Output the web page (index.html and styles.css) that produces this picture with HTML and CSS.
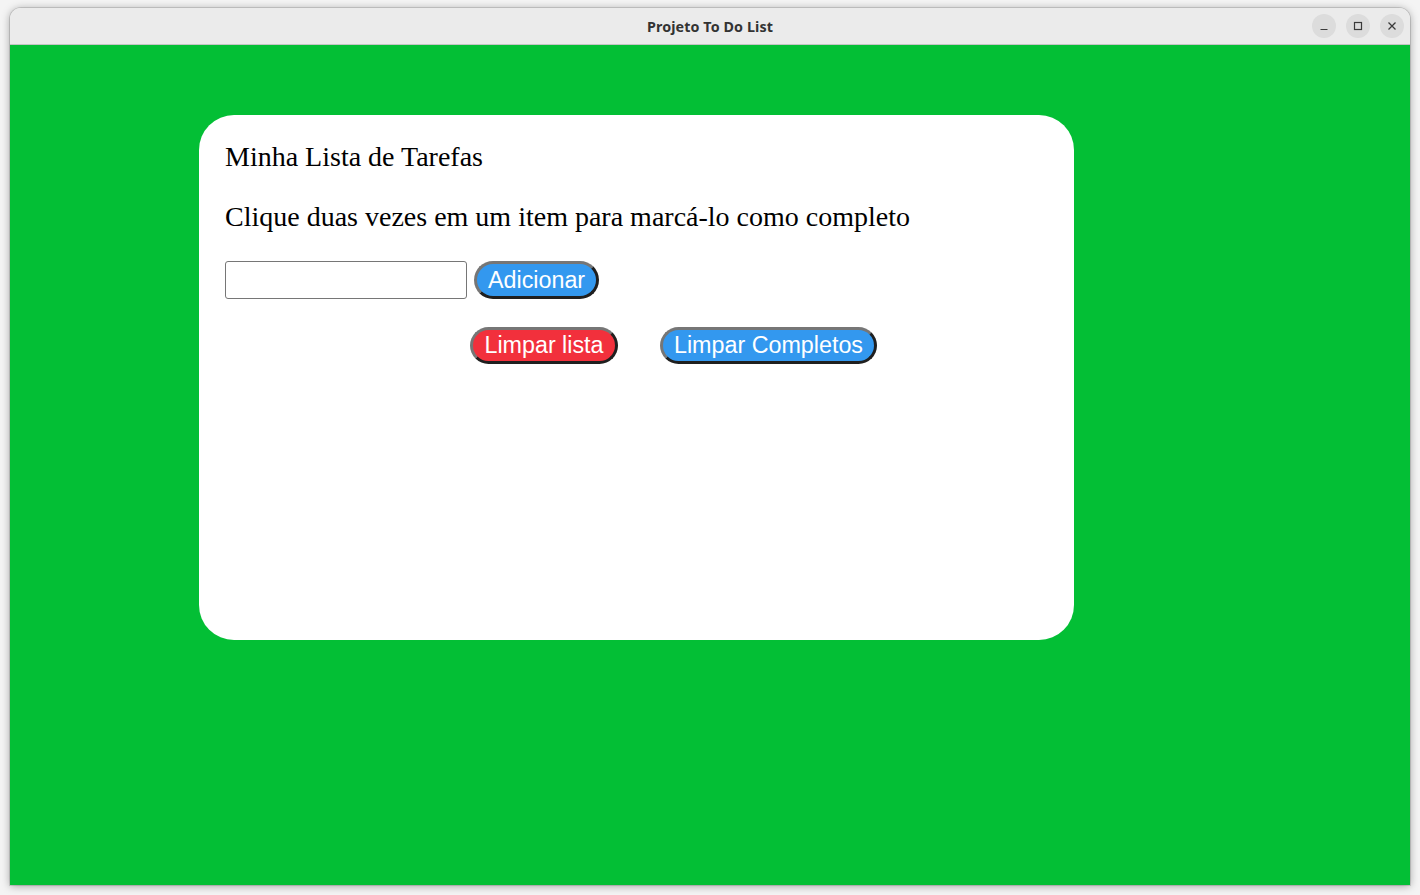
FILE: index.html
```html
<!DOCTYPE html>
<html lang="pt-BR">
<head>
<meta charset="utf-8">
<title>Projeto To Do List</title>
<link rel="stylesheet" href="styles.css">
</head>
<body>
<div class="desktop">
  <div class="window">
    <header class="titlebar">
      <span class="spacer"></span>
      <span class="title">Projeto To Do List</span>
      <div class="controls">
        <span class="ctl"><svg width="10" height="10" viewBox="0 0 10 10"><path d="M1.5 8.5h7" stroke="#3a3a3a" stroke-width="1.2"/></svg></span>
        <span class="ctl"><svg width="10" height="10" viewBox="0 0 10 10"><rect x="1.5" y="1.5" width="7" height="7" fill="none" stroke="#3a3a3a" stroke-width="1.2"/></svg></span>
        <span class="ctl"><svg width="10" height="10" viewBox="0 0 10 10"><path d="M1.5 1.5l7 7M8.5 1.5l-7 7" stroke="#3a3a3a" stroke-width="1.3"/></svg></span>
      </div>
    </header>
    <main class="app">
      <section class="card">
        <div class="heading">Minha Lista de Tarefas</div>
        <p class="hint">Clique duas vezes em um item para marcá-lo como completo</p>
        <div class="add-row">
          <input class="task-input" type="text">
          <button class="btn btn-blue">Adicionar</button>
        </div>
        <div class="clear-row">
          <button class="btn btn-red btn-clear">Limpar lista</button>
          <button class="btn btn-blue btn-done">Limpar Completos</button>
        </div>
        <ul class="list"></ul>
      </section>
    </main>
  </div>
</div>
</body>
</html>
```
FILE: styles.css
```css
html, body {
  margin: 0;
  padding: 0;
  background: #f6f6f6;
}

.desktop {
  width: 1420px;
  height: 895px;
  box-sizing: border-box;
  padding: 8px 10px 10px 10px;
  background: #f4f4f4;
}

.window {
  width: 1400px;
  height: 877px;
  display: flex;
  flex-direction: column;
  border-radius: 11px 11px 0 0;
  overflow: hidden;
  box-shadow: 0 1px 8px rgba(0, 0, 0, 0.35), 0 0 0 1px rgba(0, 0, 0, 0.12);
}

.titlebar {
  height: 36px;
  flex: none;
  background: #ebebeb;
  border-bottom: 1px solid #c4c4c4;
  display: grid;
  grid-template-columns: 1fr auto 1fr;
  align-items: center;
}

.title {
  font-family: "Noto Sans", "DejaVu Sans", sans-serif;
  font-weight: 700;
  font-size: 14.3px;
  color: #333333;
  letter-spacing: 0.1px;
  padding-top: 1px;
}

.controls {
  justify-self: end;
  display: flex;
  gap: 10px;
  padding-right: 6px;
}

.ctl {
  width: 24px;
  height: 24px;
  border-radius: 50%;
  background: #dcdcdc;
  display: flex;
  align-items: center;
  justify-content: center;
}

.ctl svg {
  display: block;
}

.app {
  flex: 1;
  background: #03bf35;
  padding: 70px 0 0 189px;
  box-sizing: border-box;
}

.card {
  width: 875px;
  height: 525px;
  box-sizing: border-box;
  background: #ffffff;
  border-radius: 35px;
  padding: 26px 26px 26px 26px;
  font-family: "Liberation Serif", "Times New Roman", serif;
  font-size: 28px;
  color: #000000;
}

.heading {
  line-height: normal;
}

.hint {
  margin: 28px 0 0 0;
  line-height: normal;
}

.add-row {
  display: flex;
  align-items: center;
  gap: 7px;
  margin-top: 28px;
}

.task-input {
  width: 242px;
  height: 38px;
  box-sizing: border-box;
  border: 1px solid #767676;
  border-radius: 3px;
  padding: 2px 4px;
  font-family: "Liberation Sans", Arial, sans-serif;
  font-size: 23px;
  margin: 0;
}

.btn {
  font-family: "Liberation Sans", Arial, sans-serif;
  font-size: 23.3px;
  color: #ffffff;
  border-width: 3px;
  border-style: solid;
  border-color: #767676 #1f1f1f #1f1f1f #767676;
  border-radius: 20px;
  padding: 0 11px;
  height: 38px;
  line-height: 30px;
  margin: 0;
  cursor: pointer;
  text-align: center;
}

.btn-blue {
  background: #3398ef;
}

.btn-red {
  background: #f2303c;
}

.clear-row {
  display: flex;
  gap: 42px;
  margin-top: 28px;
  margin-left: 245px;
}

.clear-row .btn {
  height: 37px;
  line-height: 29px;
  padding: 0;
}

.btn-clear {
  width: 148px;
}

.btn-done {
  width: 217px;
}

.list {
  margin: 0;
  padding: 0;
  list-style: none;
}
```
